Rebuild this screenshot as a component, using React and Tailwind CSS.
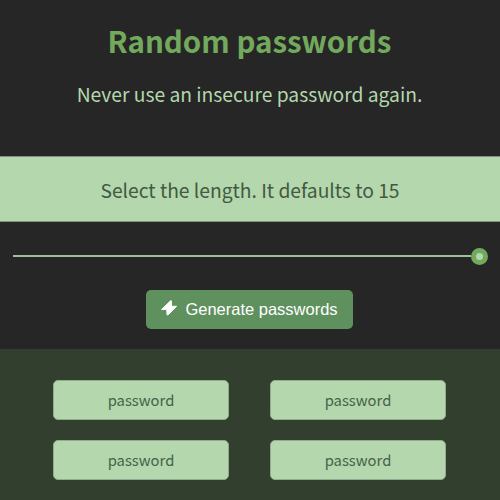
const sans = "font-['Noto_Sans_CJK_SC','Open_Sans',sans-serif]";

function Bolt() {
  return (
    <svg className="mb-[3px] h-4 w-4 shrink-0" viewBox="0 0 16 16" fill="white" stroke="white" strokeWidth="1" strokeLinejoin="round" aria-hidden="true">
      <path d="M9.6 .8L.6 9.4H5.8L6 14.8H7.2L15.6 6.3H10.4V.8Z" />
    </svg>
  );
}

function Password() {
  return (
    <div className="flex h-10 items-center justify-center rounded-[5px] border border-[#91ad8b] bg-[#b4d7ad] pt-px text-[14.8px] leading-none text-[#47634a]">
      password
    </div>
  );
}

export default function App() {
  return (
    <div className={`flex h-[500px] w-[500px] flex-col overflow-hidden bg-[#262626] text-center ${sans}`}>
      <header className="h-[156px] shrink-0 pt-5">
        <h1 className="pr-px text-[29.5px] leading-10 font-bold text-[#73a95c]">Random passwords</h1>
        <p className="mt-[18px] pr-px text-[19.25px] leading-8 text-[#b4d7ad]">Never use an insecure password again.</p>
      </header>
      <div className="flex h-[66px] shrink-0 items-center justify-center border-y border-[#7d9478] bg-[#b4d7ad] pt-0.5 text-[19.25px] text-[#425a41]">
        <span>Select the length. It defaults to 15</span>
      </div>
      <div className="flex h-[68px] shrink-0 items-center pr-3 pl-[13px]">
        <div className="h-0.5 flex-1 bg-[#9fbf98]" />
        <div className="flex h-[17px] w-[17px] items-center justify-center rounded-full bg-[#73a95c]">
          <div className="h-[7px] w-[7px] rounded-full bg-[#b4d7ad]" />
        </div>
      </div>
      <div className="flex h-[59px] shrink-0 justify-center pr-px">
        <button className="flex h-[39px] w-[207px] items-center justify-center gap-2 rounded-[5px] bg-[#5f915f] font-['Liberation_Sans',Arial,sans-serif] text-[16.5px] text-white">
          <Bolt />
          <span>Generate passwords</span>
        </button>
      </div>
      <main className="grid flex-1 grid-cols-2 content-start gap-x-[41px] gap-y-5 bg-[#323f2f] pt-[31px] pr-[54px] pl-[53px]">
        <Password />
        <Password />
        <Password />
        <Password />
      </main>
    </div>
  );
}
